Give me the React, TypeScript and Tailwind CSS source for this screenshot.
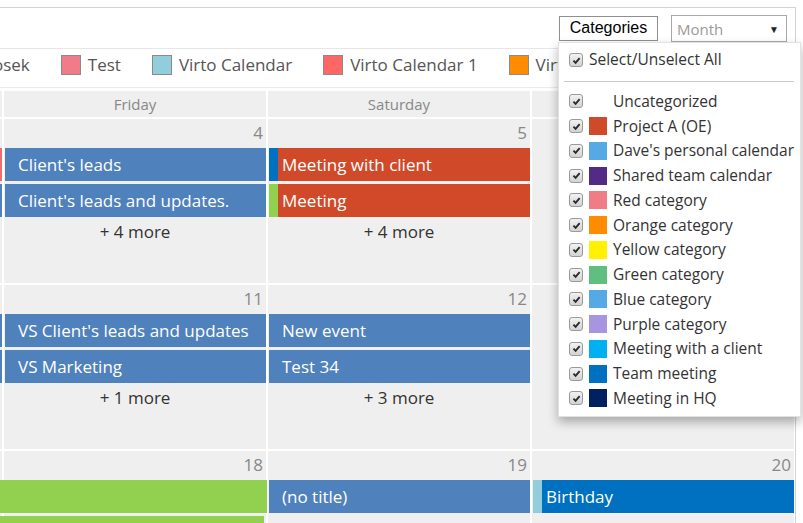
import React from "react";

type Ev = { title?: string; bg: string; stripe: string; cls?: string };
type Cell = { date: number; events: Ev[]; more?: number };

const BLUE = { bg: "bg-[#4f81bd]", stripe: "bg-[#4f81bd]" };

const rows: Cell[][] = [
  [
    { date: 3, events: [{ bg: "bg-[#f46b6e]", stripe: "bg-[#f46b6e]" }, { ...BLUE }], more: 2 },
    { date: 4, events: [{ title: "Client's leads", ...BLUE }, { title: "Client's leads and updates.", ...BLUE }], more: 4 },
    {
      date: 5,
      events: [
        { title: "Meeting with client", bg: "bg-[#d04a29]", stripe: "bg-[#0070c0]" },
        { title: "Meeting", bg: "bg-[#d04a29]", stripe: "bg-[#92d050]" },
      ],
      more: 4,
    },
    { date: 6, events: [] },
  ],
  [
    { date: 10, events: [{ ...BLUE }, { ...BLUE }], more: 1 },
    { date: 11, events: [{ title: "VS Client's leads and updates", ...BLUE }, { title: "VS Marketing", ...BLUE }], more: 1 },
    { date: 12, events: [{ title: "New event", ...BLUE }, { title: "Test 34", ...BLUE }], more: 3 },
    { date: 13, events: [] },
  ],
  [
    { date: 17, events: [{ bg: "bg-[#92d050]", stripe: "bg-[#92d050]" }, { bg: "bg-[#92d050]", stripe: "bg-[#92d050]" }] },
    {
      date: 18,
      events: [
        { bg: "bg-[#92d050]", stripe: "bg-[#92d050]", cls: "-ml-[3px] -mr-px" },
        { bg: "bg-[#92d050]", stripe: "bg-[#92d050]", cls: "-ml-[3px] mr-[2px]" },
      ],
    },
    { date: 19, events: [{ title: "(no title)", ...BLUE }] },
    { date: 20, events: [{ title: "Birthday", bg: "bg-[#0070c0]", stripe: "bg-[#92cddc]" }] },
  ],
];

const legend = [
  { name: "Test", color: "bg-[#f07c88]" },
  { name: "Virto Calendar", color: "bg-[#92cddc]" },
  { name: "Virto Calendar 1", color: "bg-[#ff6666]" },
  { name: "Virto Calendar 2", color: "bg-[#ff8c00]" },
];

const categories = [
  { name: "Uncategorized", color: "" },
  { name: "Project A (OE)", color: "bg-[#cf4a2a]" },
  { name: "Dave's personal calendar", color: "bg-[#56a9e4]" },
  { name: "Shared team calendar", color: "bg-[#532a84]" },
  { name: "Red category", color: "bg-[#f07c88]" },
  { name: "Orange category", color: "bg-[#ff8c00]" },
  { name: "Yellow category", color: "bg-[#fff100]" },
  { name: "Green category", color: "bg-[#5fbf7f]" },
  { name: "Blue category", color: "bg-[#55a9e4]" },
  { name: "Purple category", color: "bg-[#a895e0]" },
  { name: "Meeting with a client", color: "bg-[#00b0f0]" },
  { name: "Team meeting", color: "bg-[#0070c0]" },
  { name: "Meeting in HQ", color: "bg-[#002060]" },
];

function Check() {
  return (
    <span className="flex h-[14px] w-[14px] shrink-0 items-center justify-center rounded-[3px] border border-[#9a9a9a] bg-linear-to-b from-[#f2f2f2] to-[#d2d2d2]">
      <svg viewBox="0 0 10 10" className="h-[9px] w-[9px]">
        <path d="M1.6 5.2 L4 7.6 L8.5 2.3" stroke="#2b2b2b" strokeWidth="2.1" fill="none" />
      </svg>
    </span>
  );
}

function Bar({ ev }: { ev: Ev }) {
  return (
    <div className={`flex h-[33px] ${ev.cls ?? "ml-px"}`}>
      <div className={`w-[9px] shrink-0 ${ev.stripe}`} />
      <div className={`flex-1 overflow-hidden whitespace-nowrap pl-[4px] text-[17px] leading-[33px] text-white ${ev.bg}`}>
        {ev.title}
      </div>
    </div>
  );
}

function DayCell({ cell }: { cell: Cell }) {
  return (
    <div className="flex h-[164px] flex-col bg-[#efefef]">
      <div className="h-[29px] pr-[3px] text-right text-[17px] leading-[28px] text-[#888]">{cell.date}</div>
      <div className="flex flex-col gap-[3px]">
        {cell.events.map((ev, i) => (
          <Bar key={i} ev={ev} />
        ))}
      </div>
      {cell.more && (
        <div className="mt-[3px] text-center text-[17px] leading-[24px] text-[#333]">+ {cell.more} more</div>
      )}
    </div>
  );
}

export default function App() {
  return (
    <div className="relative h-[523px] w-[803px] overflow-hidden bg-white font-['Open_Sans',sans-serif]">
      <div className="mt-[7px] w-[796px] border-t border-r border-[#d3d3d3]">
        {/* toolbar */}
        <div className="flex h-[41px] items-center justify-end gap-[13px] border-b border-[#e6e6e6] pr-[8px]">
          <button className="h-[25px] w-[99px] border border-[#8f8f8f] bg-white font-['Liberation_Sans',Arial,sans-serif] text-[16px] leading-[22px] text-black">
            Categories
          </button>
          <div className="flex h-[27px] w-[116px] items-center justify-between border border-[#a9a9a9] pt-[2px] pr-[7px] pl-[5px]">
            <span className="text-[15px] text-[#9a9a9a]">Month</span>
            <span className="text-[10px] text-[#222]">▼</span>
          </div>
        </div>

        {/* legend */}
        <div className="flex h-[39px] items-start gap-[31px] overflow-hidden border-b border-[#ececec] pt-[6px] text-[17px] leading-[20px] whitespace-nowrap text-[#555]">
          <span className="-ml-[18px]">Bosek</span>
          {legend.map((l) => (
            <div key={l.name} className="flex items-center gap-[7px]">
              <span className={`h-[20px] w-[20px] border border-[#8a8a8a] ${l.color}`} />
              <span>{l.name}</span>
            </div>
          ))}
        </div>

        {/* month grid */}
        <div className="overflow-hidden pt-[3px]">
          <div className="-ml-[260px] grid grid-cols-[repeat(4,262px)] gap-[2px]">
            {["Thursday", "Friday", "Saturday", "Sunday"].map((d) => (
              <div key={d} className="h-[26px] bg-[#efefef] text-center text-[15px] leading-[26px] text-[#888]">
                {d}
              </div>
            ))}
            {rows.flat().map((c) => (
              <DayCell key={c.date} cell={c} />
            ))}
          </div>
        </div>
      </div>

      {/* categories dropdown */}
      <div className="absolute top-[42px] left-[558px] flex h-[375px] w-[243px] flex-col border border-[#e2e2e2] bg-white pt-[6px] pl-[10px] text-[15.5px] text-[#333] shadow-[0_5px_10px_rgba(0,0,0,0.3)]">
        <div className="flex h-[22px] items-center gap-[6px]">
          <Check />
          <span>Select/Unselect All</span>
        </div>
        <div className="mt-[10px] mr-[6px] -ml-[5px] h-px bg-[#c8c8c8]" />
        <div className="mt-[7px] flex flex-col">
          {categories.map((c) => (
            <div key={c.name} className="flex h-[24.75px] items-center gap-[6px] whitespace-nowrap">
              <Check />
              <span className={`h-[18px] w-[18px] shrink-0 ${c.color}`} />
              <span>{c.name}</span>
            </div>
          ))}
        </div>
      </div>
    </div>
  );
}
